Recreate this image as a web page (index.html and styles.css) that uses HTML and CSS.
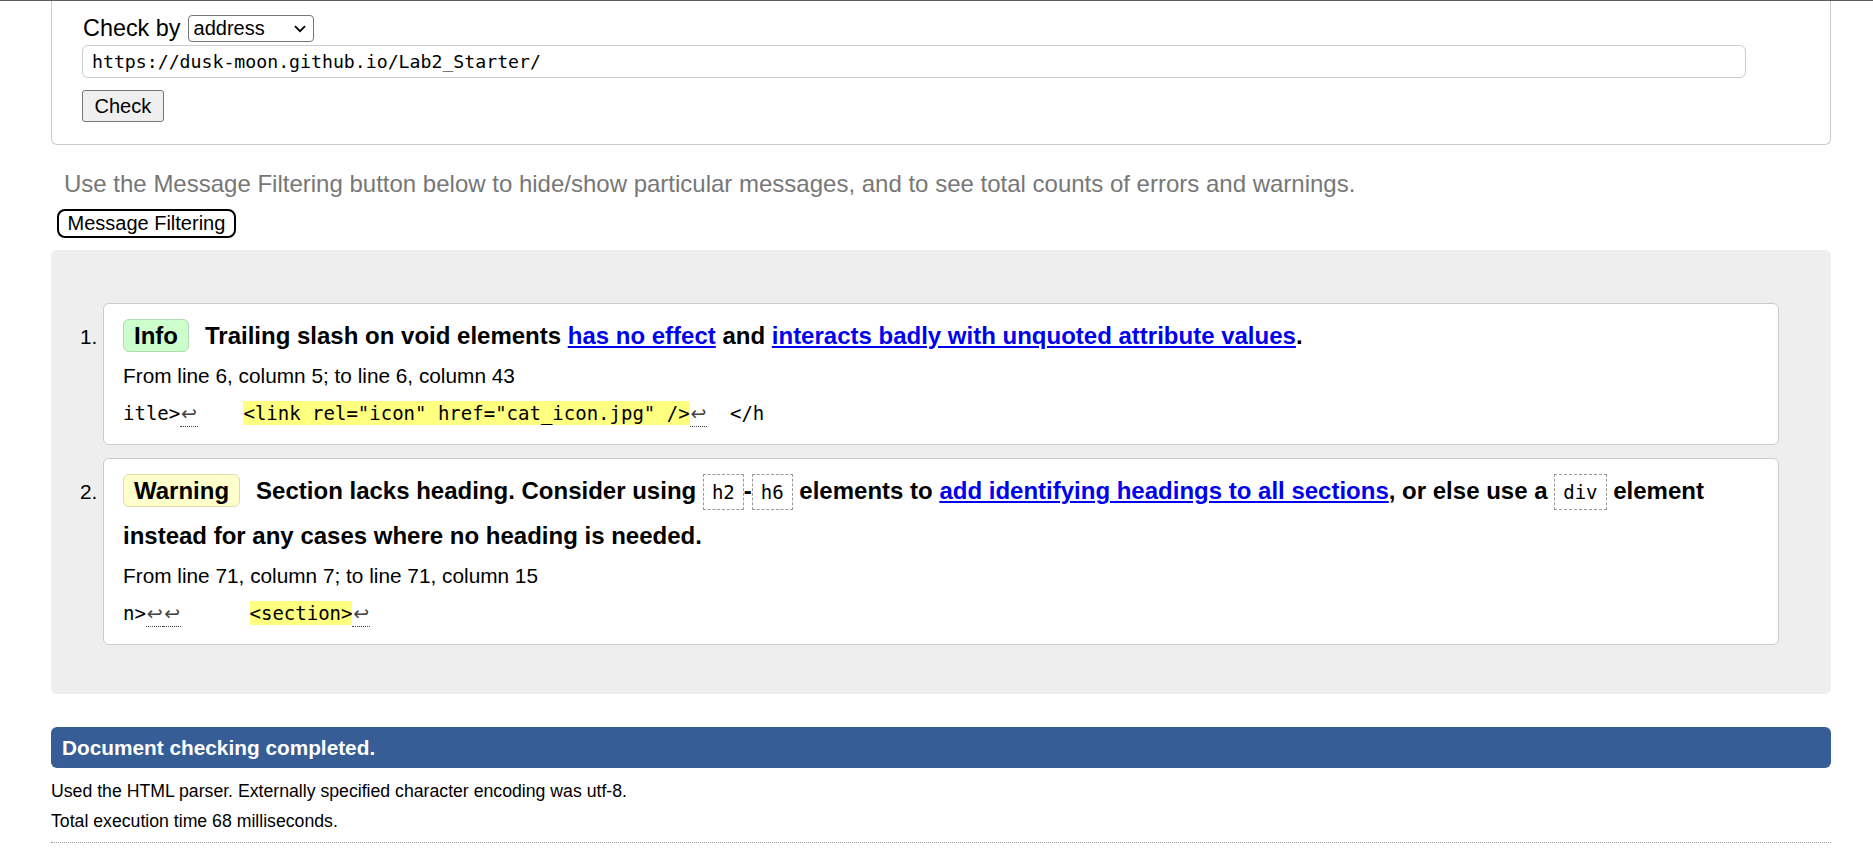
FILE: index.html
```html
<!DOCTYPE html>
<html lang="en">
<head>
<meta charset="utf-8">
<title>Nu Html Checker</title>
<link rel="stylesheet" href="styles.css">
</head>
<body>
<div class="page">
  <form class="form-box">
    <div class="check-row">
      <span class="label">Check by</span>
      <span class="select">address<svg class="chev" width="12" height="8" viewBox="0 0 12 8"><path d="M1 1.2 L6 6.2 L11 1.2" fill="none" stroke="#000" stroke-width="1.8"/></svg></span>
    </div>
    <div class="url">https://dusk-moon.github.io/Lab2_Starter/</div>
    <button type="button" class="check-btn">Check</button>
  </form>

  <p class="hint">Use the Message Filtering button below to hide/show particular messages, and to see total counts of errors and warnings.</p>
  <button type="button" class="filter-btn">Message Filtering</button>

  <div class="results">
    <ol class="messages">
      <li class="msg">
        <p class="msg-text"><span class="badge info">Info</span>Trailing slash on void elements <a href="#">has no effect</a> and <a href="#">interacts badly with unquoted attribute values</a>.</p>
        <p class="loc">From line 6, column 5; to line 6, column 43</p>
        <p class="extract">itle&gt;<span class="lf">↩</span>    <b class="hl">&lt;link rel="icon" href="cat_icon.jpg" /&gt;</b><span class="lf">↩</span>  &lt;/h</p>
      </li>
      <li class="msg">
        <p class="msg-text"><span class="badge warning">Warning</span>Section lacks heading. Consider using <code>h2</code>-<code>h6</code> elements to <a href="#">add identifying headings to all sections</a>, or else use a <code>div</code> element <span class="tail">instead for any cases where no heading is needed.</span></p>
        <p class="loc">From line 71, column 7; to line 71, column 15</p>
        <p class="extract">n&gt;<span class="lf">↩</span><span class="lf">↩</span>      <b class="hl">&lt;section&gt;</b><span class="lf">↩</span></p>
      </li>
    </ol>
  </div>

  <p class="done">Document checking completed.</p>
  <p class="details first">Used the HTML parser. Externally specified character encoding was utf-8.</p>
  <p class="details">Total execution time 68 milliseconds.</p>
  <hr class="footer-rule">
</div>
</body>
</html>
```
FILE: styles.css
```css
html, body {
  background: #fff;
}
body {
  margin: 0;
  border-top: 1px solid #5c5c5c;
  font-family: "Liberation Sans", Arial, sans-serif;
  color: #000;
}
.page {
  padding-left: 51px;
  width: 1780px;
}

/* form */
.form-box {
  margin: 0;
  border: 1px solid #cccccc;
  border-top: none;
  border-radius: 0 0 6px 6px;
  padding: 14px 30px 22px 30px;
}
.check-row {
  display: flex;
  align-items: center;
  height: 27px;
  gap: 7px;
}
.label {
  font-size: 23.4px;
  line-height: 27px;
  padding-left: 1px;
}
.select {
  box-sizing: border-box;
  width: 126px;
  height: 27px;
  border: 1px solid #767676;
  border-radius: 4px;
  display: flex;
  align-items: center;
  justify-content: space-between;
  padding: 0 7px 0 5px;
  font-size: 20px;
  line-height: 25px;
}
.chev {
  display: block;
}
.url {
  margin-top: 3px;
  width: 1664px;
  height: 33px;
  box-sizing: border-box;
  border: 1px solid #cccccc;
  border-radius: 6px;
  padding: 0 9px;
  font-family: "DejaVu Sans Mono", "Liberation Mono", monospace;
  font-size: 18.2px;
  line-height: 31px;
  white-space: nowrap;
}
.check-btn {
  display: block;
  margin-top: 12px;
  height: 32px;
  box-sizing: border-box;
  padding: 0 11.5px;
  font-family: "Liberation Sans", Arial, sans-serif;
  font-size: 20px;
  line-height: 30px;
  color: #000;
  background: #efefef;
  border: 1px solid #767676;
  border-radius: 3px;
}

/* hint + filter */
.hint {
  margin: 24px 0 0 13px;
  font-size: 24px;
  line-height: 30px;
  color: #777777;
}
.filter-btn {
  display: block;
  margin: 10px 0 0 6px;
  height: 29px;
  box-sizing: border-box;
  padding: 0 8.5px;
  border: 2px solid #000;
  border-radius: 8px;
  background: #fff;
  color: #000;
  font-family: "Liberation Sans", Arial, sans-serif;
  font-size: 20px;
  line-height: 25px;
}

/* results */
.results {
  margin-top: 12px;
  background: #eeeeee;
  border-radius: 6px;
  padding: 53px 52px 49px 52px;
}
.messages {
  margin: 0;
  padding: 0;
  list-style: decimal outside;
}
.msg {
  background: #fff;
  border: 1px solid #cccccc;
  border-radius: 6px;
  padding: 10px 19px 12px 19px;
  font-size: 20.8px;
  margin-bottom: 13px;
}
.msg:last-child {
  margin-bottom: 0;
}
.msg-text {
  margin: 0;
  font-size: 24px;
  font-weight: bold;
  line-height: 43px;
}
.msg-text a {
  color: #0000ee;
  text-decoration: underline;
}
.badge {
  display: inline-block;
  line-height: 31px;
  padding: 0 10px;
  border: 1px solid;
  border-radius: 6px;
  margin-right: 16px;
}
.badge.info {
  background: #ccffcc;
  border-color: #b3d9b3;
}
.badge.warning {
  background: #ffffcc;
  border-color: #e0dca8;
}
.msg-text code {
  font-family: "DejaVu Sans Mono", "Liberation Mono", monospace;
  font-size: 19px;
  font-weight: normal;
  border: 1px dashed #999999;
  padding: 6px 8px;
}
.loc {
  margin: 0;
  font-size: 20.8px;
  line-height: 38px;
}
.extract {
  margin: 0;
  white-space: pre;
  font-family: "DejaVu Sans Mono", "Liberation Mono", monospace;
  font-size: 19px;
  line-height: 37px;
}
.hl {
  font-weight: normal;
  background: #ffff80;
  padding: 1px 0;
}
.lf {
  display: inline-block;
  width: 17.5px;
  text-align: center;
  font-family: "DejaVu Sans", sans-serif;
  font-size: 19px;
  line-height: 25px;
  border-bottom: 1px dotted #444;
  color: #444;
}

/* footer */
.done {
  margin: 33px 0 0 0;
  background: #365d95;
  color: #fff;
  font-weight: bold;
  font-size: 20.8px;
  line-height: 41px;
  padding: 0 11px;
  border-radius: 6px;
}
.details {
  margin: 0;
  font-size: 17.68px;
  line-height: 30px;
}
.details.first {
  margin-top: 8px;
}
.footer-rule {
  border: 0;
  border-top: 1px dotted #999999;
  height: 0;
  margin: 6px 0 0 0;
}
```
